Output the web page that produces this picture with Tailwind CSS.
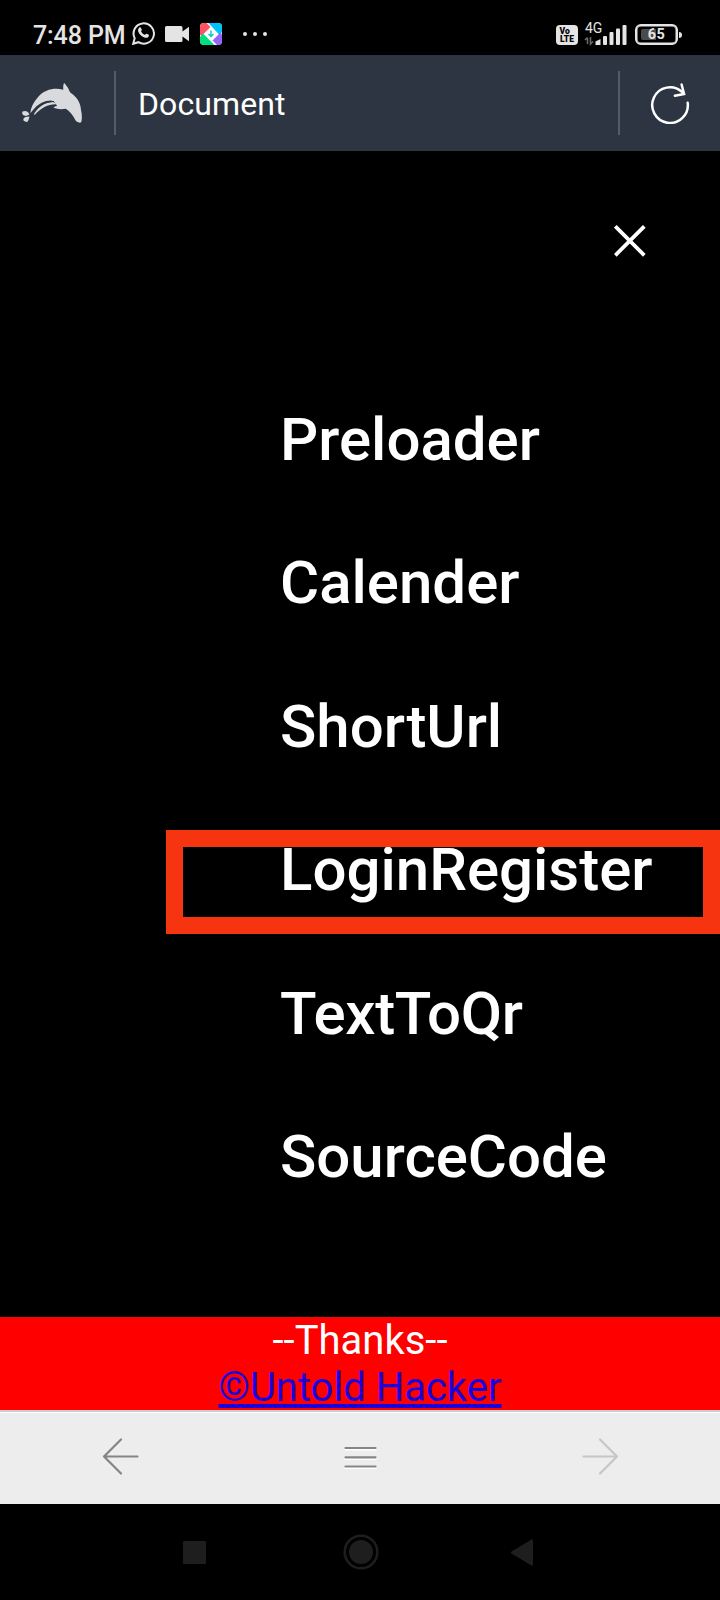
<!DOCTYPE html>
<html lang="en">
<head>
<meta charset="utf-8">
<title>Document</title>
<script src="https://cdn.jsdelivr.net/npm/@tailwindcss/browser@4"></script>
</head>
<body class="bg-black">
<div class="flex h-[1600px] w-[720px] flex-col overflow-hidden bg-black font-['Roboto',sans-serif]">

  <!-- Status bar -->
  <header class="flex h-[55px] shrink-0 items-start justify-between text-[#e4e4e4]">
    <div class="flex pl-[33px] pt-5">
      <span class="mt-px -mb-px w-[98px] whitespace-nowrap text-[25px] leading-[30px] font-medium tracking-[-0.1px]">7:48 PM</span>
      <svg class="mt-[1px] h-6 w-6" viewBox="0 0 24 24" fill="none" stroke="#e4e4e4">
        <path stroke-width="2" d="M2.2 22.8 3.7 17.2A10.2 10.2 0 1 1 7.4 21.2Z"/>
        <path fill="#e4e4e4" stroke="none" d="M8.2 6.7c.7-.7 1.5-.5 1.8.2l.8 1.9c.2.5-.9 1.4-.7 1.8.8 1.5 2 2.6 3.6 3.2.5.2 1.2-1.3 1.8-1.1l1.9.9c.9.4.5 1.7-.1 2.3-1 1-2.5 1.1-4 .5-2.8-1-4.8-3-5.9-5.4-.6-1.5-.5-3.200.8-4.300Z"/>
      </svg>
      <svg class="mt-[6px] ml-[10px] h-4 w-6" viewBox="0 0 24 16" fill="#e4e4e4"><path d="M1.500 0h14.500q1.500 0 1.500 1.500v4L24 .8v14.400l-6.500-4.700v4q0 1.500-1.500 1.500h-14.500Q0 16 0 14.500v-13Q0 0 1.500 0Z"/></svg>
      <svg class="mt-[3px] ml-[11px] h-[22px] w-[22px] rounded-[4px]" viewBox="0 0 22 22">
        <rect width="22" height="22" fill="#fff"/>
        <path fill="#ff5364" d="M0 0h6.500l4 4L1.500 13 0 11.500Z"/>
        <path fill="#00c3fb" d="M8.500 0H22v9L19.500 12Z"/>
        <path fill="#9166fb" d="M22 11.500V22h-5l-4.500-4.500 8-8Z"/>
        <path fill="#00df82" d="M0 14l3-3.500L14.500 22H0Z"/>
        <path fill="none" stroke="#1ac4c4" stroke-width="1.500" d="M11 7.500v6M8.500 11l2.500 2.500 2.500-2.500"/>
      </svg>
      <svg class="mt-3 ml-[21px] h-1 w-6" viewBox="0 0 24 4" fill="#e4e4e4"><circle cx="2" cy="2" r="2"/><circle cx="12" cy="2" r="2"/><circle cx="22" cy="2" r="2"/></svg>
    </div>
    <div class="flex pt-[22px] pr-[38px]">
      <div class="mt-[3px] flex h-[20px] w-[22px] flex-col items-center rounded-[4px] bg-[#e4e4e4] pt-[2px] text-[8.500px] leading-[8px] font-black text-black"><span class="w-[15px]">Vo</span><span>LTE</span></div>
      <div class="relative ml-[6px] h-[24px] w-[43px]">
        <span class="absolute left-[1px] -top-[1px] text-[14px] leading-[14px]">4G</span>
        <svg class="h-[24px] w-[43px]" viewBox="0 0 43 24">
          <g fill="#e4e4e4"><path d="M11.500 23v-3.500l5-2.500V23Z"/><rect x="19" y="14" width="4" height="9" rx="1"/><rect x="25.500" y="10" width="4" height="13" rx="1"/><rect x="32" y="6.500" width="4" height="16.500" rx="1"/><rect x="38.500" y="3" width="4" height="20" rx="1"/></g>
          <path fill="none" stroke="#686868" stroke-width="1.600" d="M3.500 16v6M1 18l2.500-2.500M6.500 15v7l2.500-2.500"/>
        </svg>
      </div>
      <div class="mt-[1px] ml-[8px] flex items-center">
        <div class="relative flex h-[21px] w-[43px] items-center justify-center rounded-[6px] border-[2.500px] border-[#e4e4e4] shadow-[inset_0_0_0_0.5px_#e4e4e4]">
          <span class="absolute left-[4px] h-[11px] w-[15px] rounded-l-[2px] bg-[#4b4b4b]"></span>
          <span class="relative text-[14.500px] leading-[16px] font-bold tracking-[.5px]">65</span>
        </div>
        <span class="ml-[1px] h-[6px] w-[3px] rounded-r-sm bg-[#e4e4e4]"></span>
      </div>
    </div>
  </header>

  <!-- Browser address bar -->
  <div class="flex h-[96px] shrink-0 items-start bg-[#2e3542] pt-4">
    <svg class="mt-3 ml-[21px] h-[40px] w-[62px]" viewBox="0 0 62 40" fill="#d9dadd">
      <path d="M9.300 30.300Q9.500 22.500 17.300 13.700C24 6.500 33 4.500 42.300 6.700Q42 2.500 42.800.500Q43.500-.300 44.500 1.500Q48 5.500 49 9.300Q53 12 55.700 15.300Q59.500 20.500 60 27Q61.200 32 60.700 37Q60.500 40 59 39.700Q55 39.500 53.500 35.500Q50 29 44.700 25.700Q38 27 32.500 24.700Q33.500 23.300 36 23Q34.500 18.500 30 17.500Q20 17.500 12.500 26.500Z"/>
      <path d="M12.800 31.300C17 24 24 19 32 19L37 21.500C28 20.500 21 24.500 13.800 31.800Z"/>
      <path fill="none" stroke="#2e3542" stroke-width="1.200" d="M11.500 29Q20 18 33 18.500"/>
      <path d="M8.500 31.500Q6.500 26.500 1.500 28.500Q0 32 5 33ZM8.500 33.500Q1.500 33.500 2.500 37.500Q6.500 40.500 7.500 37Z"/>
    </svg>
    <span class="ml-[31px] h-16 w-[2px] bg-[#565c67]"></span>
    <span class="ml-[22px] grow pt-[14px] text-[32px] leading-[38px] tracking-[0.1px] text-white">Document</span>
    <span class="h-16 w-[2px] bg-[#565c67]"></span>
    <svg class="mt-[11px] mr-[30px] ml-[30px] h-[42px] w-[40px]" viewBox="0 0 40 42" fill="none" stroke="#fff" stroke-width="2.500" stroke-linecap="round">
      <path d="M37.700 20.800A17.800 17.800 0 1 1 31.900 9.800M31.600 2.500L34.100 12L24.900 13.700"/>
    </svg>
  </div>

  <!-- Page content -->
  <main class="relative flex h-[1166px] shrink-0 flex-col">
    <div class="flex h-[217px] shrink-0 justify-end pt-[74px] pr-[74px]">
      <svg class="h-8 w-8" viewBox="0 0 32 32" stroke="#fff" stroke-width="3.800"><path d="M1.300 1.300l29 29M30.300 1.300l-29 29"/></svg>
    </div>
    <nav class="flex flex-col pl-[280px] text-[60px] leading-[143.300px] font-medium text-white">
      <a>Preloader</a>
      <a>Calender</a>
      <a>ShortUrl</a>
      <a>LoginRegister</a>
      <a class="mt-px tracking-[-0.3px]">TextToQr</a>
      <a>SourceCode</a>
    </nav>
    <div class="absolute top-[679px] right-0 h-[104px] w-[554px] border-[17px] border-[#f63410]"></div>
  </main>

  <footer class="h-[93px] shrink-0 bg-[#ff0000] text-center text-[40px] leading-[47px] text-white">
    <p>--Thanks--</p>
    <p><a class="text-[#1a00dc] underline decoration-4 underline-offset-[3px] [text-decoration-skip-ink:none]">©Untold Hacker</a></p>
  </footer>

  <!-- Browser toolbar -->
  <div class="flex h-[94px] shrink-0 items-start justify-between border-t-2 border-[#d0cccc] bg-[#ededed] pr-[101px] pl-[102px] pt-[25px] shadow-[inset_0_1px_0_#fff]">
    <svg class="h-[40px] w-[37px]" viewBox="0 0 37 40" fill="none" stroke="#858585" stroke-width="2.200" stroke-linecap="round" stroke-linejoin="round"><path d="M35.500 19.500H2M19 2.500L2 19.500L19 36.500"/></svg>
    <svg class="h-[40px] w-[34px]" viewBox="0.5 0 34 40" stroke-linecap="round" stroke-width="2.200"><path stroke="#fff" d="M2 12.500h30M2 21.800h30M2 31h30"/><path stroke="#858585" d="M2 11h30M2 20.300h30M2 29.500h30"/></svg>
    <svg class="h-[40px] w-[37px]" viewBox="0 0 37 40" fill="none" stroke="#c6c6c6" stroke-width="2.200" stroke-linecap="round" stroke-linejoin="round"><path d="M1.500 19.500H35M18 2.500L35 19.500L18 36.500"/></svg>
  </div>

  <!-- System navigation -->
  <div class="flex h-[96px] items-center pl-[183px]">
    <span class="h-[23px] w-[23px] rounded-[1px] bg-[#1e1e1e]"></span>
    <svg class="ml-[136.500px] h-9 w-9" viewBox="0 0 36 36"><circle cx="18" cy="18" r="16.300" fill="none" stroke="#1e1e1e" stroke-width="2.500"/><circle cx="18" cy="18" r="12" fill="#1e1e1e"/></svg>
    <svg class="ml-[132.500px] h-[27px] w-[22px]" viewBox="0 0 22 27"><path fill="#1e1e1e" d="M20.500.500Q22 0 22 1.500v24q0 1.500-1.500 1L.500 14.500q-1-1 0-2Z"/></svg>
  </div>
</div>
</body>
</html>
